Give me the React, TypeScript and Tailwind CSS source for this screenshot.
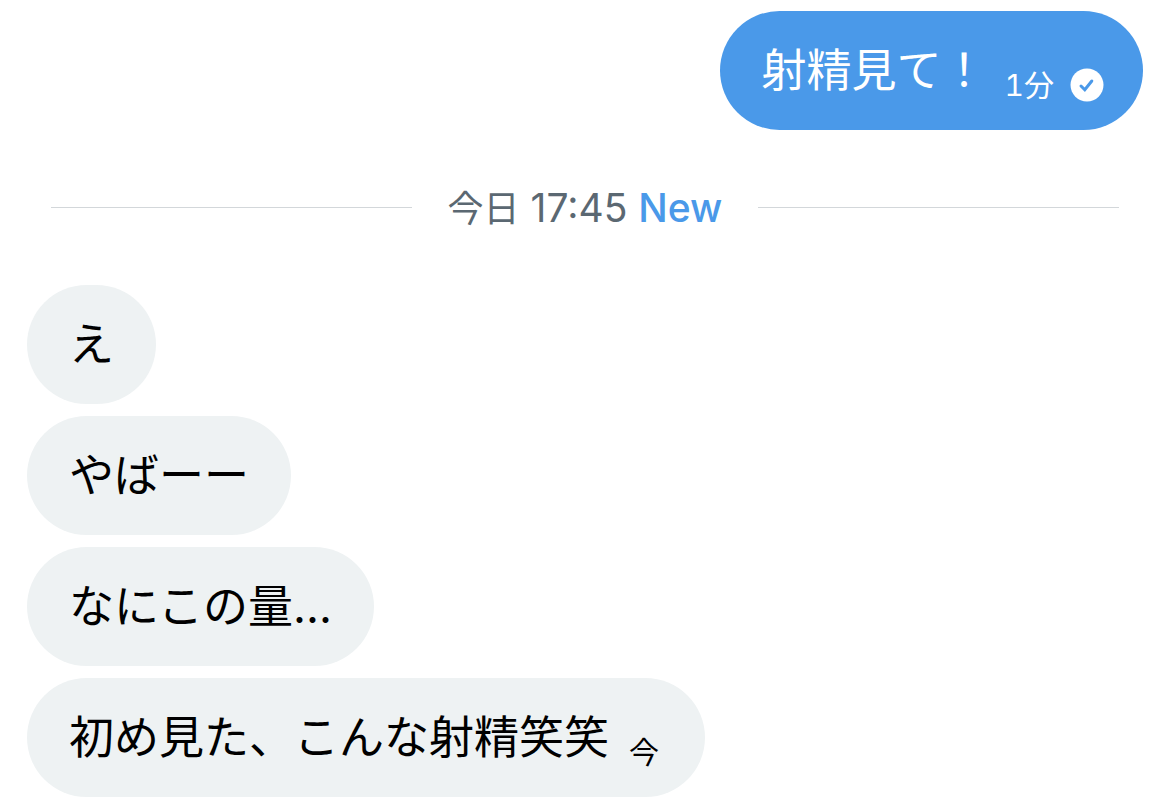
interface Message {
  id: number;
  text: string;
  time?: string;
}

const RECEIVED: Message[] = [
  { id: 1, text: 'え' },
  { id: 2, text: 'やばーー' },
  { id: 3, text: 'なにこの量...' },
  { id: 4, text: '初め見た、こんな射精笑笑', time: '今' },
];

const SentBadge = () => (
  <svg viewBox="0 0 34 34" className="size-[34px]" role="img" aria-label="送信済み">
    <circle cx="17" cy="17" r="16.5" fill="#fff" />
    <path
      d="M11 18l3.8 3.8 7-8.8"
      fill="none"
      stroke="#4a99e9"
      strokeWidth="3"
      strokeLinecap="round"
      strokeLinejoin="miter"
    />
  </svg>
);

const DateDivider = () => (
  <div className="mx-6 mt-[47px] flex h-[60px] items-center gap-9">
    <div className="h-px flex-1 bg-[#d3d7da]" />
    <p className="text-[39px] leading-none text-[#5b6872]">
      <span className="text-[36px]">今日</span> 17:45{' '}
      <span className="font-medium text-[#4a99e9]">New</span>
    </p>
    <div className="h-px flex-1 bg-[#d3d7da]" />
  </div>
);

const App = () => (
  <main className="bg-white px-[27px] pt-[11px] font-['Inter','Noto_Sans_CJK_JP',sans-serif]">
    <div className="ml-auto flex h-[119px] w-fit items-center rounded-full bg-[#4a99e9] pr-[39px] pl-[42px] text-white">
      <p className="text-[45px] leading-none">射精見て！</p>
      <span className="mt-7 ml-[18px] text-[30px] leading-none tabular-nums">1分</span>
      <span className="mt-7 ml-4">
        <SentBadge />
      </span>
    </div>

    <DateDivider />

    <ul className="mt-12 flex flex-col items-start gap-3">
      {RECEIVED.map(message => (
        <li
          key={message.id}
          className="flex h-[119px] items-center rounded-full bg-[#eef2f3] px-[42px] text-black"
        >
          <p className="text-[45px] leading-none">{message.text}</p>
          {message.time && (
            <span className="mt-7 mr-1 ml-5 text-[30px] leading-none">{message.time}</span>
          )}
        </li>
      ))}
    </ul>
  </main>
);

export default App;
